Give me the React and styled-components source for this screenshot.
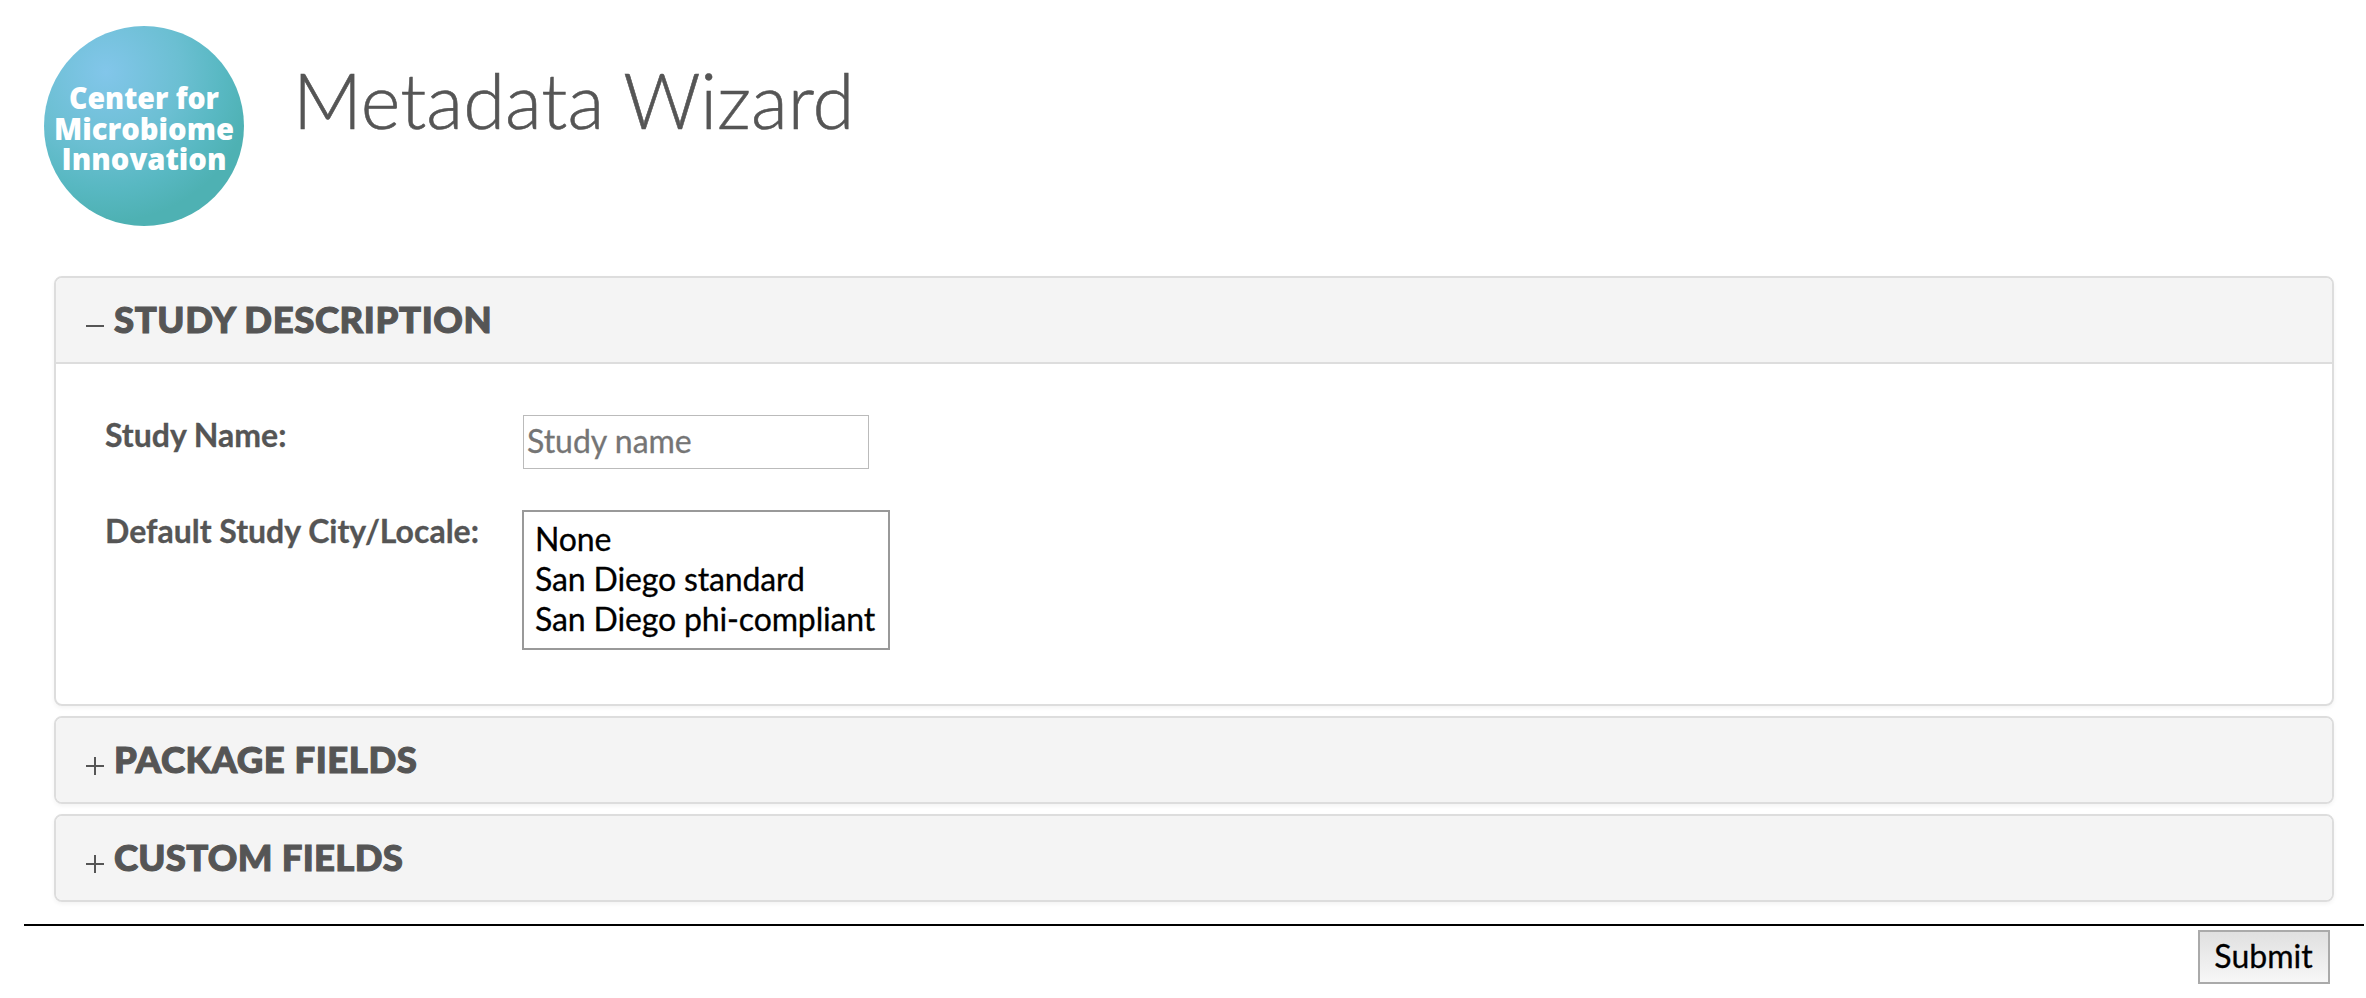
import React, { useState } from "react";
import styled, { createGlobalStyle } from "styled-components";

const GlobalStyle = createGlobalStyle`
  * { box-sizing: border-box; }
  html, body { margin: 0; background: #fff; }
  body { font-family: Lato, "Liberation Sans", sans-serif; font-size: 32px; color: #555; }
`;

const Page = styled.main`
  width: 2366px;
  height: 998px;
  overflow: hidden;
`;

const Header = styled.header`
  display: flex;
  align-items: flex-start;
  height: 276px;
  padding: 26px 44px 0;
`;

const Logo = styled.svg`
  display: block;
  width: 200px;
  height: 200px;
  flex: none;
  font-family: "Open Sans", "Noto Sans", sans-serif;
  font-size: 30.5px;
  font-weight: 800;
  fill: #fff;
`;

const Title = styled.h1`
  margin: 28px 0 0 49px;
  font-size: 76px;
  font-weight: 300;
  line-height: 92px;
  white-space: nowrap;
  -webkit-text-stroke: 0.6px #555;
`;

const Panels = styled.div`
  display: flex;
  flex-direction: column;
  gap: 10px;
  padding: 0 32px 0 54px;
`;

const Panel = styled.section`
  border: 2px solid #ddd;
  border-radius: 8px;
  overflow: hidden;
  box-shadow: 0 2px 4px rgba(0, 0, 0, 0.05);
`;

const PanelHeading = styled.div`
  display: flex;
  align-items: center;
  height: 84px;
  padding-left: 30px;
  background: #f4f4f4;
  cursor: pointer;
`;

const Toggle = styled.svg`
  width: 18px;
  height: 18px;
  margin: 12px 10px 0 0;
  flex: none;
`;

const PanelTitle = styled.h2`
  margin: 0 0 2px;
  font-size: 36.5px;
  font-weight: 900;
  line-height: 44px;
  letter-spacing: ${(p) => p.$tracking}px;
  -webkit-text-stroke: 1.1px #555;
`;

const PanelBody = styled.div`
  display: grid;
  grid-template-columns: 417px max-content;
  grid-template-rows: 95px 140px;
  height: 342px;
  padding: 51px 0 0 49px;
  border-top: 2px solid #ddd;
`;

const Label = styled.label`
  font-weight: 700;
  line-height: 40px;
  padding-top: ${(p) => p.$offset || 0}px;
  -webkit-text-stroke: 0.3px #555;
`;

const TextInput = styled.input`
  width: 346px;
  height: 54px;
  margin-left: 1px;
  padding: 0 3px 3px;
  border: 1px solid #bbb;
  border-radius: 0;
  outline: none;
  font: inherit;
  &::placeholder { color: #757575; opacity: 1; -webkit-text-stroke: 0.3px #757575; }
`;

const ListBox = styled.div`
  width: 368px;
  height: 140px;
  padding: 7px 11px;
  border: 2px solid #999;
  color: #000;
  letter-spacing: -0.14px;
  -webkit-text-stroke: 0.3px #000;
`;

const Option = styled.div`
  height: 40px;
  line-height: 40px;
  white-space: nowrap;
`;

const Footer = styled.footer`
  display: flex;
  justify-content: flex-end;
  margin: 22px 2px 0 24px;
  padding: 4px 34px 0 0;
  border-top: 2px solid #000;
`;

const SubmitButton = styled.button`
  width: 132px;
  height: 54px;
  padding: 0 1px 4px 0;
  border: 2px solid #aaa;
  border-radius: 0;
  background: linear-gradient(#e0e0e0, #f7f7f7);
  color: #000;
  font: inherit;
  -webkit-text-stroke: 0.3px #000;
`;

const cities = ["None", "San Diego standard", "San Diego phi-compliant"];

function Section({ title, tracking = 0, initiallyOpen = false, children }) {
  const [open, setOpen] = useState(initiallyOpen);
  return (
    <Panel>
      <PanelHeading onClick={() => setOpen(!open)}>
        <Toggle viewBox="0 0 18 18" stroke="#555" strokeWidth="2">
          <path d={open ? "M0 9H18" : "M0 9H18M9 0V18"} />
        </Toggle>
        <PanelTitle $tracking={tracking}>{title}</PanelTitle>
      </PanelHeading>
      {open && children}
    </Panel>
  );
}

export default function App() {
  return (
    <>
      <GlobalStyle />
      <Page>
        <Header>
          <Logo viewBox="0 0 200 200">
            <defs>
              <radialGradient id="globe" gradientUnits="userSpaceOnUse" cx="62" cy="46" r="150">
                <stop offset="0" stopColor="#82c6ea" />
                <stop offset="0.5" stopColor="#6bbfd2" />
                <stop offset="0.78" stopColor="#58b8c2" />
                <stop offset="1" stopColor="#4eb1b3" />
              </radialGradient>
            </defs>
            <circle cx="100" cy="100" r="100" fill="url(#globe)" />
            <text x="25" y="83" textLength="150" lengthAdjust="spacingAndGlyphs">Center for</text>
            <text x="10" y="113.5" textLength="180" lengthAdjust="spacingAndGlyphs">Microbiome</text>
            <text x="17.5" y="144" textLength="165" lengthAdjust="spacingAndGlyphs">Innovation</text>
          </Logo>
          <Title>Metadata Wizard</Title>
        </Header>
        <Panels>
          <Section title="STUDY DESCRIPTION" tracking={0.6} initiallyOpen>
            <PanelBody>
              <Label htmlFor="study-name">Study Name:</Label>
              <TextInput id="study-name" placeholder="Study name" />
              <Label $offset={1}>Default Study City/Locale:</Label>
              <ListBox role="listbox">
                {cities.map((city) => (
                  <Option role="option" key={city}>{city}</Option>
                ))}
              </ListBox>
            </PanelBody>
          </Section>
          <Section title="PACKAGE FIELDS" tracking={0.55} />
          <Section title="CUSTOM FIELDS" tracking={0.3} />
        </Panels>
        <Footer>
          <SubmitButton>Submit</SubmitButton>
        </Footer>
      </Page>
    </>
  );
}
